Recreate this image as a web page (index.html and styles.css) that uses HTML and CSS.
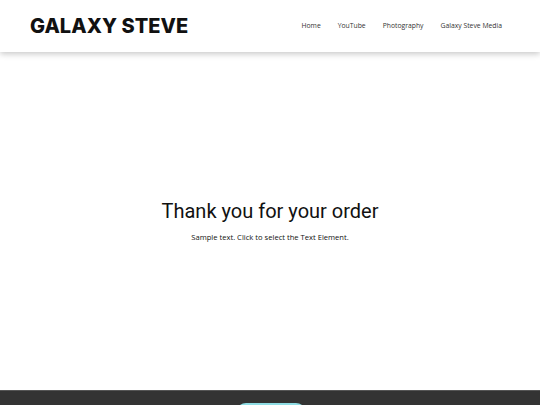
FILE: index.html
```html
<!DOCTYPE html>
<html lang="en">
<head>
<meta charset="utf-8">
<title>Thank you for your order</title>
<link rel="stylesheet" href="styles.css">
</head>
<body>
<header class="site-header">
  <div class="logo">GALAXY STEVE</div>
  <nav class="menu">
    <a href="#">Home</a>
    <a href="#">YouTube</a>
    <a href="#">Photography</a>
    <a href="#">Galaxy Steve Media</a>
  </nav>
</header>
<main class="content">
  <h1 class="title">Thank you for your order</h1>
  <p class="sample">Sample text. Click to select the Text Element.</p>
</main>
<footer class="site-footer">
  <span class="footer-btn"></span>
</footer>
</body>
</html>
```
FILE: styles.css
```css
html, body {
  margin: 0;
  padding: 0;
}
body {
  width: 540px;
  height: 405px;
  overflow: hidden;
  background: #fff;
  font-family: "Open Sans", "Liberation Sans", sans-serif;
}
.site-header {
  height: 52px;
  display: flex;
  align-items: center;
  justify-content: space-between;
  padding: 0 38px 0 30px;
  background: #fff;
  box-shadow: 0 2px 6px rgba(0,0,0,0.22);
  position: relative;
  z-index: 1;
}
.logo {
  font-family: Inter, "Liberation Sans", sans-serif;
  font-weight: 800;
  font-size: 20px;
  letter-spacing: 0.05px;
  color: #111;
}
.menu {
  display: flex;
  gap: 17px;
  margin-top: -2px;
}
.menu a {
  font-size: 6.8px;
  color: #333;
  text-decoration: none;
}
.content {
  box-sizing: border-box;
  height: 338px;
  padding-bottom: 2px;
  display: flex;
  flex-direction: column;
  align-items: center;
  justify-content: center;
}
.title {
  font-family: Roboto, "Liberation Sans", sans-serif;
  font-weight: 400;
  font-size: 20px;
  color: #111;
  margin: 0 0 9px;
}
.sample {
  font-size: 7.6px;
  color: #111;
  margin: 0;
}
.site-footer {
  height: 15px;
  background: #333;
  border-top: 1px solid #555;
  display: flex;
  justify-content: center;
  align-items: flex-start;
  overflow: hidden;
}
.footer-btn {
  display: block;
  margin-top: 12px;
  margin-left: 2px;
  width: 70px;
  height: 20px;
  border-radius: 10px;
  background: #8fdde4;
}
```
